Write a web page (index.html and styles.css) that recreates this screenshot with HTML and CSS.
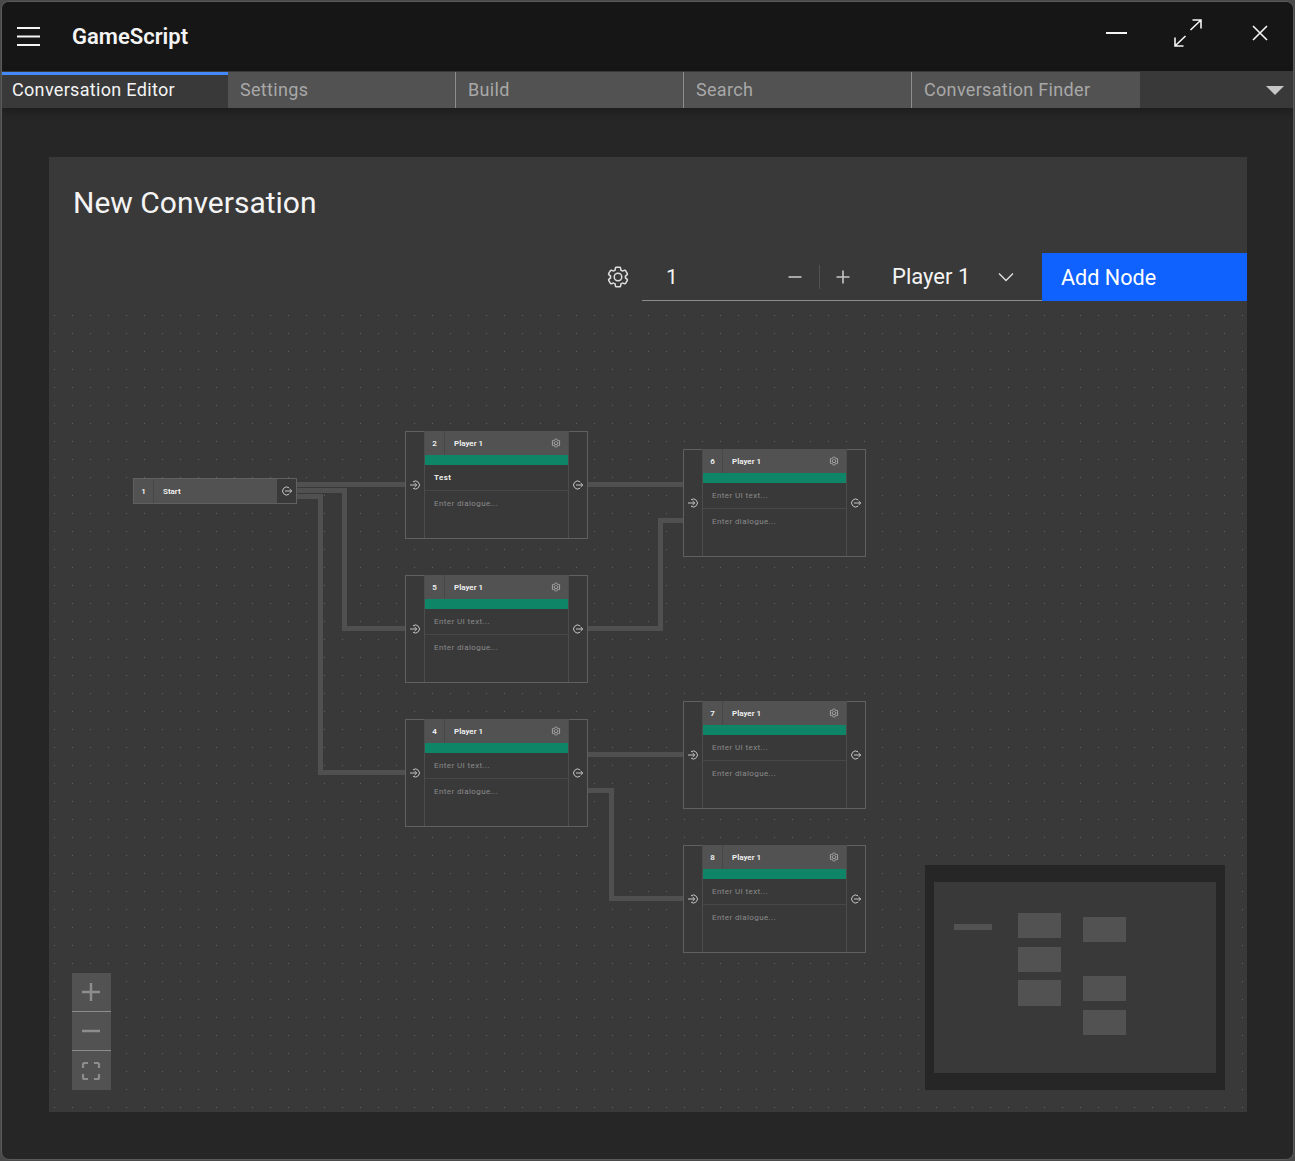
FILE: index.html
```html
<!DOCTYPE html>
<html lang="en">
<head>
    <meta charset="UTF-8">
    <meta name="viewport" content="width=device-width, initial-scale=1.0">
    <title>GameScript</title>
    <link rel="stylesheet" href="styles.css">
</head>
<body>
    <svg class="sprites" width="0" height="0">
        <symbol id="port-in" viewBox="0 0 10 10">
            <path d="M3 1.8A4 4 0 1 1 3 8.2" fill="none" stroke="currentColor"/>
            <path d="M0 5H6.5M4.6 3 6.8 5 4.6 7" fill="none" stroke="currentColor"/>
        </symbol>
        <symbol id="port-out" viewBox="0 0 10 10">
            <path d="M7 1.8A4 4 0 1 0 7 8.2" fill="none" stroke="currentColor"/>
            <path d="M3 5H9.5M7.6 3 9.8 5 7.6 7" fill="none" stroke="currentColor"/>
        </symbol>
        <symbol id="gear" viewBox="0 0 32 32">
            <path fill="currentColor" d="M27 16.76V15.24l1.92-1.68A2 2 0 0 0 29.3 11L26.94 7a2 2 0 0 0-1.73-1 2 2 0 0 0-.64.1l-2.43.82a11.35 11.35 0 0 0-1.31-.75l-.51-2.52a2 2 0 0 0-2-1.61h-4.68a2 2 0 0 0-2 1.61l-.51 2.52a11.48 11.48 0 0 0-1.32.75l-2.38-.86A2 2 0 0 0 6.79 6a2 2 0 0 0-1.73 1L2.7 11a2 2 0 0 0 .41 2.51L5 15.24v1.52l-1.89 1.68A2 2 0 0 0 2.7 21l2.36 4a2 2 0 0 0 1.73 1 2 2 0 0 0 .64-.1l2.43-.82a11.35 11.35 0 0 0 1.31.75l.51 2.52a2 2 0 0 0 2 1.61h4.72a2 2 0 0 0 2-1.61l.51-2.52a11.48 11.48 0 0 0 1.32-.75l2.42.82a2 2 0 0 0 .64.1 2 2 0 0 0 1.73-1l2.28-4a2 2 0 0 0-.41-2.51ZM25.21 24l-3.43-1.16a8.86 8.86 0 0 1-2.71 1.57L18.36 28h-4.72l-.71-3.55a9.36 9.36 0 0 1-2.7-1.57L6.79 24l-2.36-4 2.72-2.4a8.9 8.9 0 0 1 0-3.13L4.43 12l2.36-4 3.43 1.16a8.86 8.86 0 0 1 2.71-1.57L13.64 4h4.72l.71 3.55a9.36 9.36 0 0 1 2.7 1.57L25.21 8l2.36 4-2.72 2.4a8.9 8.9 0 0 1 0 3.13L27.57 20Z"/>
            <path fill="currentColor" d="M16 22a6 6 0 1 1 6-6 5.94 5.94 0 0 1-6 6Zm0-10a3.91 3.91 0 0 0-4 4 3.91 3.91 0 0 0 4 4 3.91 3.91 0 0 0 4-4 3.91 3.91 0 0 0-4-4Z"/>
        </symbol>
    </svg>

    <div class="window">
        <header class="titlebar">
            <svg class="menu-icon" width="23" height="20" viewBox="0 0 23 20">
                <path d="M0 1H23M0 9.500H23M0 18H23" stroke="#f4f4f4" stroke-width="1.8" fill="none"/>
            </svg>
            <span class="app-name">GameScript</span>
            <div class="window-buttons">
                <svg class="btn-min" width="22" height="4" viewBox="0 0 22 4"><path d="M0 2H21" stroke="#f4f4f4" stroke-width="2" fill="none"/></svg>
                <svg class="btn-max" width="28" height="28" viewBox="0 0 28 28">
                    <path d="M16.5 11 27 1M18.5 1H27V9.5M11.5 17 1 27M1 18.5V27H9.5" stroke="#f4f4f4" stroke-width="1.6" fill="none"/>
                </svg>
                <svg class="btn-close" width="16" height="16" viewBox="0 0 16 16"><path d="M1 1 15 15M15 1 1 15" stroke="#f4f4f4" stroke-width="1.6" fill="none"/></svg>
            </div>
        </header>

        <nav class="tabs">
            <div class="tab tab-active">Conversation Editor</div>
            <div class="tab">Settings</div>
            <div class="tab">Build</div>
            <div class="tab">Search</div>
            <div class="tab tab-last">Conversation Finder</div>
            <div class="tabs-rest"><span class="tabs-caret"></span></div>
        </nav>

        <main class="content">
            <section class="panel">
                <h1 class="panel-title">New Conversation</h1>
                <div class="toolbar">
                    <svg class="toolbar-gear" width="24" height="24"><use href="#gear"/></svg>
                    <div class="toolbar-field">
                        <span class="stepper-value">1</span>
                        <svg class="stepper-minus" width="14" height="14" viewBox="0 0 14 14"><path d="M0.5 7H13.5" stroke="#c6c6c6" stroke-width="1.6"/></svg>
                        <span class="stepper-sep"></span>
                        <svg class="stepper-plus" width="14" height="14" viewBox="0 0 14 14"><path d="M0.5 7H13.5M7 0.5V13.5" stroke="#c6c6c6" stroke-width="1.6"/></svg>
                        <span class="actor-name">Player 1</span>
                        <svg class="actor-chevron" width="16" height="10" viewBox="0 0 16 10"><path d="M1 1.5 8 8.5 15 1.5" stroke="#e0e0e0" stroke-width="1.4" fill="none"/></svg>
                    </div>
                    <button class="add-node">Add Node</button>
                </div>

                <div class="canvas">
                    <svg class="wires" width="1198" height="811" viewBox="49 301 1198 811">
                        <path d="M297 484.500H405"/>
                        <path d="M297 490.500H344.500V628.500H405"/>
                        <path d="M297 496.500H320.500V772.500H405"/>
                        <path d="M588 484.500H683"/>
                        <path d="M588 628.500H660.500V520.500H683"/>
                        <path d="M588 754.500H683"/>
                        <path d="M588 790.500H611.500V898.500H683"/>
                    </svg>

                    <div class="start-node">
                        <span class="node-num">1</span>
                        <span class="start-label">Start</span>
                        <span class="start-port"><svg width="10" height="10"><use href="#port-out"/></svg></span>
                    </div>

                    <div class="node node-a">
                        <div class="node-port"><svg width="10" height="10"><use href="#port-in"/></svg></div>
                        <div class="node-body">
                            <div class="node-head"><span class="node-num">2</span><span class="node-actor">Player 1</span><svg width="10" height="10"><use href="#gear"/></svg></div>
                            <div class="node-color"></div>
                            <div class="node-ui node-filled">Test</div>
                            <div class="node-dialogue">Enter dialogue...</div>
                        </div>
                        <div class="node-port"><svg width="10" height="10"><use href="#port-out"/></svg></div>
                    </div>

                    <div class="node node-b">
                        <div class="node-port"><svg width="10" height="10"><use href="#port-in"/></svg></div>
                        <div class="node-body">
                            <div class="node-head"><span class="node-num">5</span><span class="node-actor">Player 1</span><svg width="10" height="10"><use href="#gear"/></svg></div>
                            <div class="node-color"></div>
                            <div class="node-ui">Enter UI text...</div>
                            <div class="node-dialogue">Enter dialogue...</div>
                        </div>
                        <div class="node-port"><svg width="10" height="10"><use href="#port-out"/></svg></div>
                    </div>

                    <div class="node node-c">
                        <div class="node-port"><svg width="10" height="10"><use href="#port-in"/></svg></div>
                        <div class="node-body">
                            <div class="node-head"><span class="node-num">4</span><span class="node-actor">Player 1</span><svg width="10" height="10"><use href="#gear"/></svg></div>
                            <div class="node-color"></div>
                            <div class="node-ui">Enter UI text...</div>
                            <div class="node-dialogue">Enter dialogue...</div>
                        </div>
                        <div class="node-port"><svg width="10" height="10"><use href="#port-out"/></svg></div>
                    </div>

                    <div class="node node-d">
                        <div class="node-port"><svg width="10" height="10"><use href="#port-in"/></svg></div>
                        <div class="node-body">
                            <div class="node-head"><span class="node-num">6</span><span class="node-actor">Player 1</span><svg width="10" height="10"><use href="#gear"/></svg></div>
                            <div class="node-color"></div>
                            <div class="node-ui">Enter UI text...</div>
                            <div class="node-dialogue">Enter dialogue...</div>
                        </div>
                        <div class="node-port"><svg width="10" height="10"><use href="#port-out"/></svg></div>
                    </div>

                    <div class="node node-e">
                        <div class="node-port"><svg width="10" height="10"><use href="#port-in"/></svg></div>
                        <div class="node-body">
                            <div class="node-head"><span class="node-num">7</span><span class="node-actor">Player 1</span><svg width="10" height="10"><use href="#gear"/></svg></div>
                            <div class="node-color"></div>
                            <div class="node-ui">Enter UI text...</div>
                            <div class="node-dialogue">Enter dialogue...</div>
                        </div>
                        <div class="node-port"><svg width="10" height="10"><use href="#port-out"/></svg></div>
                    </div>

                    <div class="node node-f">
                        <div class="node-port"><svg width="10" height="10"><use href="#port-in"/></svg></div>
                        <div class="node-body">
                            <div class="node-head"><span class="node-num">8</span><span class="node-actor">Player 1</span><svg width="10" height="10"><use href="#gear"/></svg></div>
                            <div class="node-color"></div>
                            <div class="node-ui">Enter UI text...</div>
                            <div class="node-dialogue">Enter dialogue...</div>
                        </div>
                        <div class="node-port"><svg width="10" height="10"><use href="#port-out"/></svg></div>
                    </div>

                    <div class="zoom-controls">
                        <div class="zoom-btn"><svg width="20" height="20" viewBox="0 0 20 20"><path d="M1 10H19M10 1V19" stroke="#8d8d8d" stroke-width="2.4"/></svg></div>
                        <div class="zoom-btn"><svg width="20" height="20" viewBox="0 0 20 20"><path d="M1 10H19" stroke="#8d8d8d" stroke-width="2.4"/></svg></div>
                        <div class="zoom-btn"><svg width="20" height="20" viewBox="0 0 20 20"><path d="M2 7V3.500Q2 2 3.500 2H7M13 2H16.500Q18 2 18 3.500V7M18 13V16.500Q18 18 16.500 18H13M7 18H3.500Q2 18 2 16.500V13" stroke="#8d8d8d" stroke-width="2.2" fill="none"/></svg></div>
                    </div>

                    <div class="minimap">
                        <div class="minimap-view">
                            <span class="mini mini-start"></span>
                            <span class="mini mini-1"></span>
                            <span class="mini mini-2"></span>
                            <span class="mini mini-3"></span>
                            <span class="mini mini-4"></span>
                            <span class="mini mini-5"></span>
                            <span class="mini mini-6"></span>
                        </div>
                    </div>
                </div>
            </section>
        </main>
    </div>
</body>
</html>
```

FILE: styles.css
```css
* {
    box-sizing: border-box;
}
html, body {
    margin: 0;
    padding: 0;
    height: 1161px;
    overflow: hidden;
}
body {
    font-family: Roboto, "Liberation Sans", sans-serif;
    background-color: #4a4a4a;
    padding: 1px 1px 1px 1px;
}
.sprites {
    position: absolute;
}
.window {
    height: 1159px;
    display: flex;
    flex-direction: column;
    border: 1px solid #5a5a5a;
    border-radius: 8px;
    overflow: hidden;
    background-color: #262626;
}

/* title bar */
.titlebar {
    height: 69px;
    flex: none;
    display: flex;
    align-items: center;
    background-color: #161616;
    padding-left: 15px;
}
.menu-icon {
    margin-right: 32px;
}
.app-name {
    font-size: 22px;
    font-weight: 600;
    color: #f4f4f4;
}
.window-buttons {
    margin-left: auto;
    position: relative;
    width: 194px;
    height: 69px;
}
.btn-min {
    position: absolute;
    left: 7px;
    top: 29px;
}
.btn-max {
    position: absolute;
    left: 75px;
    top: 17px;
}
.btn-close {
    position: absolute;
    left: 153px;
    top: 23px;
}

/* tabs */
.tabs {
    height: 37px;
    flex: none;
    display: flex;
    padding-top: 1px;
    background-color: #393939;
    box-shadow: 0 4px 8px rgba(0, 0, 0, 0.25);
    position: relative;
}
.tab {
    width: 228px;
    height: 36px;
    padding-left: 12px;
    line-height: 36px;
    font-size: 18px;
    letter-spacing: 0.32px;
    color: #a8a8a8;
    background-color: #525252;
    border-right: 1px solid #8d8d8d;
}
.tab-active {
    width: 226px;
    padding-left: 10px;
    line-height: 30px;
    color: #f4f4f4;
    background-color: #393939;
    border-top: 3px solid #4589ff;
    border-right: 0;
}
.tab-last {
    border-right: 0;
}
.tabs-rest {
    flex: 1;
    position: relative;
}
.tabs-caret {
    position: absolute;
    right: 9px;
    top: 14px;
    border-left: 9px solid transparent;
    border-right: 9px solid transparent;
    border-top: 9px solid #c6c6c6;
}

/* panel */
.content {
    flex: 1;
    padding: 49px 46px 48px 47px;
}
.panel {
    height: 955px;
    display: flex;
    flex-direction: column;
    background-color: #393939;
}
.panel-title {
    margin: 0;
    height: 96px;
    padding: 28px 0 0 24px;
    font-size: 30px;
    line-height: 36px;
    font-weight: 400;
    color: #f4f4f4;
}
.toolbar {
    height: 48px;
    flex: none;
    display: flex;
    align-items: center;
    justify-content: flex-end;
}
.toolbar-gear {
    color: #e0e0e0;
    margin-right: 12px;
}
.toolbar-field {
    width: 400px;
    height: 48px;
    display: flex;
    align-items: center;
    border-bottom: 1px solid #8d8d8d;
    color: #f4f4f4;
    font-size: 21px;
}
.stepper-value {
    width: 146px;
    padding-left: 24px;
}
.stepper-minus {
    margin-right: 17px;
}
.stepper-sep {
    width: 1px;
    height: 24px;
    background-color: #525252;
    margin-right: 16px;
}
.stepper-plus {
    margin-right: 42px;
}
.actor-name {
    width: 106px;
    font-size: 22px;
}
.actor-chevron {
    flex: none;
}
.add-node {
    width: 205px;
    height: 48px;
    border: 0;
    padding: 0 0 0 19px;
    text-align: left;
    font-family: inherit;
    font-size: 21.6px;
    color: #fff;
    background-color: #0f62fe;
}

/* canvas, nodes sit on it at their own coordinates */
.canvas {
    flex: 1;
    position: relative;
    background-image: radial-gradient(circle at 0.5px 0.5px, #636363 0.6px, transparent 0.7px);
    background-size: 18px 18px;
    background-position: 5px 14px;
}
.wires {
    position: absolute;
    left: 0;
    top: 0;
}
.wires path {
    fill: none;
    stroke: #505050;
    stroke-width: 5;
}
.start-node {
    position: absolute;
    left: 84px;
    top: 177px;
    width: 164px;
    height: 26px;
    display: flex;
    align-items: center;
    background-color: #525252;
    border: 1px solid #606060;
}
.node-num {
    width: 20px;
    height: 100%;
    flex: none;
    display: flex;
    align-items: center;
    justify-content: center;
    font-size: 8px;
    font-weight: 600;
    color: #f4f4f4;
    border-right: 1px solid #474747;
}
.start-label {
    flex: 1;
    padding-left: 9px;
    font-size: 8px;
    font-weight: 600;
    color: #f4f4f4;
}
.start-port {
    width: 19px;
    height: 100%;
    display: flex;
    align-items: center;
    justify-content: center;
    color: #c6c6c6;
    background-color: #393939;
}
.node {
    position: absolute;
    width: 183px;
    height: 108px;
    display: flex;
    border: 1px solid #606060;
    background-color: #393939;
}
.node-a { left: 356px; top: 130px; }
.node-b { left: 356px; top: 274px; }
.node-c { left: 356px; top: 418px; }
.node-d { left: 634px; top: 148px; }
.node-e { left: 634px; top: 400px; }
.node-f { left: 634px; top: 544px; }
.node-port {
    width: 18px;
    flex: none;
    display: flex;
    align-items: center;
    justify-content: center;
    color: #c6c6c6;
}
.node-body {
    flex: 1;
    display: flex;
    flex-direction: column;
    margin-top: -1px;
    border-left: 1px solid #4c4c4c;
    border-right: 1px solid #4c4c4c;
}
.node-head {
    height: 24px;
    flex: none;
    display: flex;
    align-items: center;
    background-color: #525252;
    color: #c6c6c6;
    padding-right: 7px;
}
.node-actor {
    flex: 1;
    padding-left: 9px;
    font-size: 8px;
    font-weight: 600;
    color: #f4f4f4;
}
.node-color {
    height: 10px;
    flex: none;
    background-color: #0f8568;
}
.node-ui {
    height: 26px;
    flex: none;
    display: flex;
    align-items: center;
    padding-left: 9px;
    font-size: 8px;
    letter-spacing: 0.4px;
    color: #8a8a8a;
    border-bottom: 1px solid #474747;
}
.node-filled {
    color: #f4f4f4;
    font-weight: 600;
}
.node-dialogue {
    height: 24px;
    flex: none;
    display: flex;
    align-items: center;
    padding-left: 9px;
    font-size: 8px;
    letter-spacing: 0.4px;
    color: #8a8a8a;
}

/* zoom buttons */
.zoom-controls {
    position: absolute;
    left: 23px;
    top: 672px;
    width: 39px;
    height: 117px;
    display: flex;
    flex-direction: column;
    background-color: #525252;
}
.zoom-btn {
    height: 39px;
    display: flex;
    align-items: center;
    justify-content: center;
    padding-right: 1px;
    border-bottom: 1px solid #8d8d8d;
}
.zoom-btn:last-child {
    border-bottom: 0;
}

/* minimap */
.minimap {
    position: absolute;
    left: 876px;
    top: 564px;
    width: 300px;
    height: 225px;
    padding: 17px 9px;
    background-color: #262626;
}
.minimap-view {
    position: relative;
    height: 191px;
    background-color: #393939;
}
.mini {
    position: absolute;
    width: 43px;
    height: 25px;
    background-color: #525252;
}
.mini-start { left: 20px; top: 42px; width: 38px; height: 6px; }
.mini-1 { left: 84px; top: 31px; }
.mini-2 { left: 84px; top: 65px; }
.mini-3 { left: 84px; top: 98px; height: 26px; }
.mini-4 { left: 149px; top: 35px; }
.mini-5 { left: 149px; top: 94px; }
.mini-6 { left: 149px; top: 128px; }
```
